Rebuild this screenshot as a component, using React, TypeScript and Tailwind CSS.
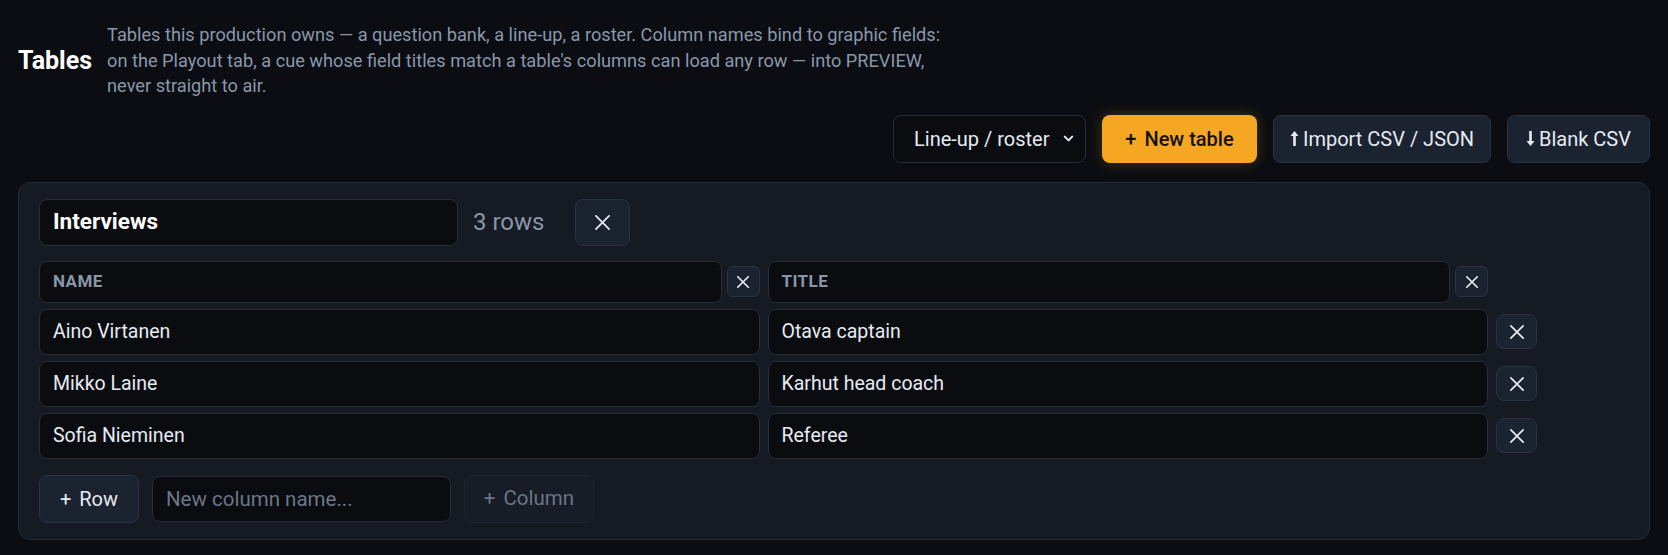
import { ChevronDown } from "lucide-react";

const rows = [
  ["Aino Virtanen", "Otava captain"],
  ["Mikko Laine", "Karhut head coach"],
  ["Sofia Nieminen", "Referee"],
];

function Cross({ size }: { size: number }) {
  return (
    <svg width={size} height={size} viewBox="0 0 16 16" fill="none" stroke="currentColor" strokeWidth={16 / size * 1.7} strokeLinecap="round">
      <path d="M1 1 L15 15 M15 1 L1 15" />
    </svg>
  );
}

function ArrowUp() {
  return (
    <svg width="9" height="17" viewBox="0 0 9 17" className="inline-block">
      <path d="M4.5 1 L8.5 6 L5.8 6 L5.8 16 L3.2 16 L3.2 6 L0.5 6 Z" fill="currentColor" />
    </svg>
  );
}

function ArrowDown() {
  return (
    <svg width="9" height="17" viewBox="0 0 9 17" className="inline-block">
      <path d="M4.5 16 L8.5 11 L5.8 11 L5.8 1 L3.2 1 L3.2 11 L0.5 11 Z" fill="currentColor" />
    </svg>
  );
}

export default function App() {
  return (
    <div className="min-h-screen bg-[#0b0d12] px-[18px] pt-[22px] font-['Roboto',sans-serif] text-[#e6ebf2]">
      {/* header */}
      <div className="flex items-center gap-[15px]">
        <h1 className="text-[25px] font-bold text-white">Tables</h1>
        <p className="text-[18.2px] leading-[25.5px] text-[#8a97aa]">
          <span className="block whitespace-nowrap">Tables this production owns — a question bank, a line-up, a roster. Column names bind to graphic fields:</span>
          <span className="block whitespace-nowrap">on the Playout tab, a cue whose field titles match a table's columns can load any row — into PREVIEW,</span>
          <span className="block whitespace-nowrap">never straight to air.</span>
        </p>
      </div>

      {/* toolbar */}
      <div className="mt-[16px] flex justify-end gap-4">
        <div className="relative flex h-[48px] w-[193px] items-center rounded-lg border border-[#272e3a] bg-[#0a0c10] pl-[20px] text-[20px]">
          Line-up / roster
          <ChevronDown className="absolute right-[9px] h-[15px] w-[15px]" strokeWidth={3.2} />
        </div>
        <button className="flex h-[48px] w-[155px] items-center justify-center gap-2 rounded-lg bg-[#f5a623] text-[20px] font-medium text-[#15110a] shadow-[0_0_14px_rgba(245,166,35,0.25)]">
          <span>+</span>New table
        </button>
        <button className="flex h-[48px] w-[218px] items-center justify-center gap-1 rounded-lg border border-[#2a3343] bg-[#1b2230] text-[20px]">
          <ArrowUp />Import CSV / JSON
        </button>
        <button className="flex h-[48px] w-[143px] items-center justify-center gap-1 rounded-lg border border-[#2a3343] bg-[#1b2230] text-[20px]">
          <ArrowDown />Blank CSV
        </button>
      </div>

      {/* table card */}
      <div className="mt-[19px] rounded-xl border border-[#252c38] bg-[#151a23] px-5 py-4">
        <div className="flex items-center">
          <div className="flex h-[47px] w-[419px] items-center rounded-lg border border-[#272e3a] bg-[#0a0c10] px-[13px] text-[22.5px] font-bold text-white">
            Interviews
          </div>
          <span className="ml-[15px] text-[24px] text-[#8a96a8]">3 rows</span>
          <button className="ml-[31px] flex h-[47px] w-[55px] items-center justify-center rounded-lg border border-[#2a3343] bg-[#1b2230]">
            <Cross size={15} />
          </button>
        </div>

        <div className="mt-[15px] grid w-[1498px] grid-cols-[1fr_1fr_41px] items-center gap-x-2 gap-y-[6px]">
          {["NAME", "TITLE"].map((c) => (
            <div key={c} className="flex items-center gap-[5px]">
              <div className="flex h-[42px] flex-1 items-center rounded-lg border border-[#272e3a] bg-[#0a0c10] px-[13px] text-[17px] font-bold tracking-wide text-[#8a96a8]">
                {c}
              </div>
              <button className="flex h-[31px] w-[33px] items-center justify-center rounded-md border border-[#2a3343] bg-[#1b2230]">
                <Cross size={12} />
              </button>
            </div>
          ))}
          <div />
          {rows.map(([n, t]) => (
            <>
              <div key={n} className="flex h-[46px] items-center rounded-lg border border-[#272e3a] bg-[#0a0c10] px-[13px] text-[19.5px]">
                {n}
              </div>
              <div key={t} className="flex h-[46px] items-center rounded-lg border border-[#272e3a] bg-[#0a0c10] px-[13px] text-[19.5px]">
                {t}
              </div>
              <button key={n + "x"} className="flex h-[35px] w-[41px] items-center justify-center rounded-lg border border-[#2a3343] bg-[#1b2230]">
                <Cross size={14} />
              </button>
            </>
          ))}
        </div>

        <div className="mt-[16px] flex items-center gap-[13px]">
          <button className="flex h-[48px] w-[100px] items-center justify-center gap-2 rounded-lg border border-[#2a3343] bg-[#1b2230] text-[20px]">
            <span>+</span>Row
          </button>
          <input
            placeholder="New column name..."
            className="h-[46px] w-[299px] rounded-lg border border-[#272e3a] bg-[#0a0c10] px-[13px] text-[20.5px] text-white placeholder:text-[#6d7686] focus:outline-none"
          />
          <button className="flex h-[48px] w-[130px] items-center justify-center gap-2 rounded-lg border border-[#1e2430] bg-[#171c26] text-[20.5px] text-[#6b7585]">
            <span>+</span>Column
          </button>
        </div>
      </div>
    </div>
  );
}
